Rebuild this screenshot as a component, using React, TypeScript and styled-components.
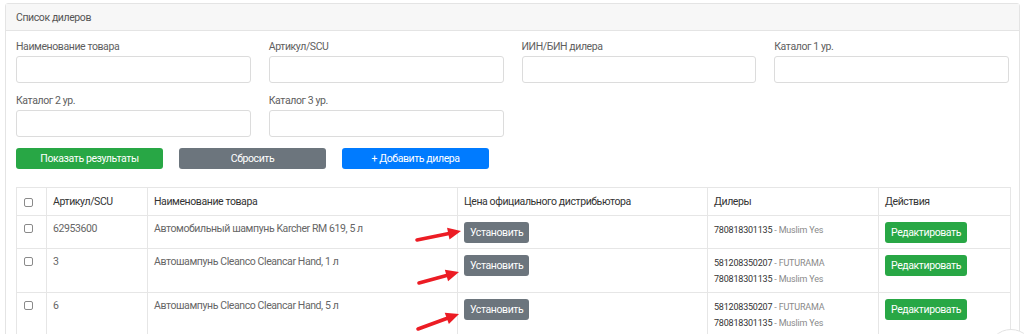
import React from 'react'
import styled, { createGlobalStyle } from 'styled-components'

const GlobalStyle = createGlobalStyle`
  html, body {
    margin: 0;
    padding: 0;
    background: #fff;
    font-family: Roboto, 'Liberation Sans', Arial, sans-serif;
  }
  * {
    box-sizing: border-box;
  }
`

const FONT = '10.5px'
const TRACK = '-0.4px'

const Page = styled.div`
  height: 334px;
  overflow: hidden;
  padding: 3px 4px 0 5px;
  letter-spacing: ${TRACK};
`

const Card = styled.div`
  border: 1px solid #e4e4e4;
  border-radius: 3px;
`

const CardHeader = styled.div`
  height: 27px;
  display: flex;
  align-items: center;
  padding: 0 10px;
  background: #f7f7f7;
  border-bottom: 1px solid #e4e4e4;
  font-size: ${FONT};
  color: #555;
`

const CardBody = styled.div`
  padding: 9px 10px 0;
`

const FilterGrid = styled.div`
  display: grid;
  grid-template-columns: repeat(4, 1fr);
  column-gap: 18px;
  row-gap: 11px;
`

const Field = styled.div`
  display: flex;
  flex-direction: column;
`

const Label = styled.label`
  font-size: ${FONT};
  line-height: 14px;
  color: #5e5e5e;
  margin-bottom: 2px;
`

const Input = styled.input`
  height: 27px;
  border: 1px solid #dcdcdc;
  border-radius: 3px;
  background: #fff;
  outline: none;
`

const ButtonRow = styled.div`
  display: flex;
  gap: 16px;
  margin-top: 11px;
`

const colors = {
  green: '#28a745',
  gray: '#6c757d',
  blue: '#007bff',
}

const Btn = styled.button<{ $color: keyof typeof colors; $wide?: boolean }>`
  height: 21px;
  width: ${(p) => (p.$wide ? '147px' : 'auto')};
  padding: 0 6px;
  border: none;
  border-radius: 3px;
  background: ${(p) => colors[p.$color]};
  color: #fff;
  font-family: inherit;
  font-size: ${FONT};
  letter-spacing: ${TRACK};
  line-height: 21px;
  cursor: pointer;
  white-space: nowrap;
`

const Table = styled.table`
  margin-top: 18px;
  width: 100%;
  border-collapse: collapse;
  table-layout: fixed;
  border: 1px solid #e6e6e6;
  font-size: ${FONT};
`

const Th = styled.th`
  height: 28px;
  padding: 0 6px;
  text-align: left;
  font-weight: 400;
  color: #333;
  border: 1px solid #e6e6e6;
  vertical-align: middle;
  line-height: 14px;
`

const Td = styled.td<{ $arrow?: boolean }>`
  position: ${(p) => (p.$arrow ? 'relative' : 'static')};
  padding: 6px 6px 5px;
  vertical-align: top;
  color: #666;
  line-height: 14px;
  border: 1px solid #e6e6e6;
`

const Check = styled.input.attrs({ type: 'checkbox' })`
  appearance: none;
  display: block;
  width: 9px;
  height: 9px;
  margin: 2px 0 0 1px;
  border: 1px solid #8a8a8a;
  border-radius: 2px;
  background: #fff;
`

const HeadCheck = styled(Check)`
  margin: 1px 0 0 1px;
`

const DealerLine = styled.div`
  line-height: 16px;
  white-space: nowrap;
  letter-spacing: -0.2px;
`

const DealerNum = styled.span`
  font-size: 9px;
  color: #333;
`

const DealerName = styled.span`
  font-size: 9px;
  color: #8a8a8a;
`

const ArrowSvg = styled.svg`
  position: absolute;
  left: -45px;
  top: 0;
  overflow: visible;
  pointer-events: none;
`

const ScrollTop = styled.div`
  position: fixed;
  left: 988px;
  top: 329px;
  width: 46px;
  height: 46px;
  border-radius: 50%;
  border: 1px solid #e2e2e2;
  background: #fff;
`

// tail / tip are relative to the price cell's top-left corner
const Arrow = ({ tail, tip }: { tail: [number, number]; tip: [number, number] }) => {
  const ox = 45
  const [x1, y1] = [tail[0] + ox, tail[1]]
  const [x2, y2] = [tip[0] + ox, tip[1]]
  const dx = x2 - x1
  const dy = y2 - y1
  const len = Math.hypot(dx, dy)
  const ux = dx / len
  const uy = dy / len
  const headLen = 13
  const headW = 6
  const bx = x2 - ux * headLen
  const by = y2 - uy * headLen
  const px = -uy
  const py = ux
  const head = `${x2},${y2} ${bx + px * headW},${by + py * headW} ${bx - px * headW},${by - py * headW}`
  return (
    <ArrowSvg width={50} height={40}>
      <line x1={x1} y1={y1} x2={bx + ux * 2} y2={by + uy * 2} stroke="#ec1c24" strokeWidth={3.6} strokeLinecap="round" />
      <polygon points={head} fill="#ec1c24" />
    </ArrowSvg>
  )
}

const filters = [
  'Наименование товара',
  'Артикул/SCU',
  'ИИН/БИН дилера',
  'Каталог 1 ур.',
  'Каталог 2 ур.',
  'Каталог 3 ур.',
]

const rows = [
  {
    sku: '62953600',
    name: 'Автомобильный шампунь Karcher RM 619, 5 л',
    dealers: [['780818301135', 'Muslim Yes']],
    arrow: { tail: [-41, 24] as [number, number], tip: [3, 15] as [number, number] },
  },
  {
    sku: '3',
    name: 'Автошампунь Cleanco Cleancar Hand, 1 л',
    dealers: [
      ['581208350207', 'FUTURAMA'],
      ['780818301135', 'Muslim Yes'],
    ],
    arrow: { tail: [-39, 34] as [number, number], tip: [1, 23] as [number, number] },
  },
  {
    sku: '6',
    name: 'Автошампунь Cleanco Cleancar Hand, 5 л',
    dealers: [
      ['581208350207', 'FUTURAMA'],
      ['780818301135', 'Muslim Yes'],
    ],
    arrow: { tail: [-40, 36] as [number, number], tip: [1, 21] as [number, number] },
  },
]

export default function App() {
  return (
    <Page>
      <GlobalStyle />
      <Card>
        <CardHeader>Список дилеров</CardHeader>
        <CardBody>
          <FilterGrid>
            {filters.map((f) => (
              <Field key={f}>
                <Label>{f}</Label>
                <Input />
              </Field>
            ))}
          </FilterGrid>
          <ButtonRow>
            <Btn $color="green" $wide>
              Показать результаты
            </Btn>
            <Btn $color="gray" $wide>
              Сбросить
            </Btn>
            <Btn $color="blue" $wide>
              + Добавить дилера
            </Btn>
          </ButtonRow>
          <Table>
            <colgroup>
              <col style={{ width: 30 }} />
              <col style={{ width: 101 }} />
              <col style={{ width: 310 }} />
              <col style={{ width: 250 }} />
              <col style={{ width: 171 }} />
              <col style={{ width: 132 }} />
            </colgroup>
            <thead>
              <tr>
                <Th>
                  <HeadCheck />
                </Th>
                <Th>Артикул/SCU</Th>
                <Th>Наименование товара</Th>
                <Th>Цена официального дистрибьютора</Th>
                <Th>Дилеры</Th>
                <Th>Действия</Th>
              </tr>
            </thead>
            <tbody>
              {rows.map((r) => (
                <tr key={r.sku}>
                  <Td>
                    <Check />
                  </Td>
                  <Td>{r.sku}</Td>
                  <Td>{r.name}</Td>
                  <Td $arrow>
                    <Arrow tail={r.arrow.tail} tip={r.arrow.tip} />
                    <Btn $color="gray">Установить</Btn>
                  </Td>
                  <Td>
                    {r.dealers.map(([num, name]) => (
                      <DealerLine key={num}>
                        <DealerNum>{num}</DealerNum>
                        <DealerName> - {name}</DealerName>
                      </DealerLine>
                    ))}
                  </Td>
                  <Td>
                    <Btn $color="green">Редактировать</Btn>
                  </Td>
                </tr>
              ))}
            </tbody>
          </Table>
        </CardBody>
      </Card>
      <ScrollTop />
    </Page>
  )
}
